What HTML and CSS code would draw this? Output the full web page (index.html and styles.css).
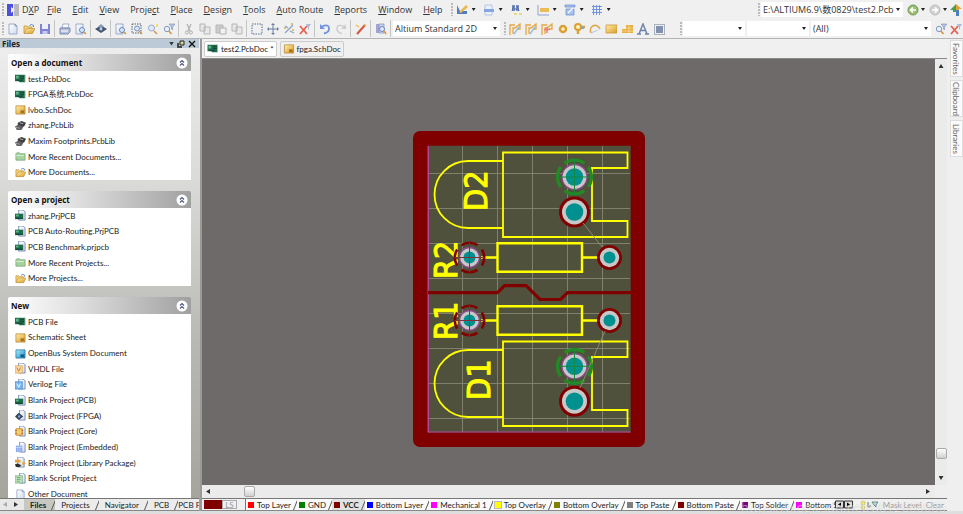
FILE: index.html
```
<!DOCTYPE html>
<html lang="en">
<head>
<meta charset="utf-8">
<title>DXP - test2.PcbDoc</title>
<link rel="stylesheet" href="styles.css">
</head>
<body>
<svg class="defs" aria-hidden="true">
  <defs>
    <linearGradient id="gold" x1="0" y1="0" x2="1" y2="1"><stop offset="0" stop-color="#fff0a8"/><stop offset="1" stop-color="#dc9a28"/></linearGradient>
    <linearGradient id="sheet" x1="0" y1="0" x2="1" y2="1"><stop offset="0" stop-color="#fff"/><stop offset="1" stop-color="#cfdcf2"/></linearGradient>
    <linearGradient id="cyan" x1="0" y1="0" x2="1" y2="1"><stop offset="0" stop-color="#a8f0ff"/><stop offset="1" stop-color="#1c86c4"/></linearGradient>
  </defs>
  <symbol id="page" viewBox="0 0 12 12"><path d="M2 1h6l2 2v8H2z" fill="url(#sheet)" stroke="#8d9bbd" stroke-width=".8"/><path d="M8 1v2h2" fill="none" stroke="#6a7ca8" stroke-width=".7"/></symbol>
  <symbol id="open" viewBox="0 0 12 12"><path d="M1 10V3h3l1 1h4v6z" fill="#f6d477" stroke="#b98b35" stroke-width=".7"/><path d="M1 10.500l2.500-5H12l-2.500 5z" fill="url(#gold)" stroke="#b98b35" stroke-width=".6"/><path d="M6.500 2.500q2-2 4 0v1.500" fill="none" stroke="#5b7fc0"/></symbol>
  <symbol id="save" viewBox="0 0 12 12"><path d="M1 1h10v10H1z" fill="#8084d4"/><path d="M3 1h6v5H3z" fill="#eef0fc"/><path d="M3.500 8h5v3h-5z" fill="#c3c6ee"/></symbol>
  <symbol id="print" viewBox="0 0 12 12"><path d="M4 1h6l-1 4H3z" fill="#fff" stroke="#8090b4" stroke-width=".7"/><path d="M1 5h10v4l-2 2H1z" fill="#b4c0dc" stroke="#66779f" stroke-width=".8"/><path d="M2 8h7" stroke="#fff"/></symbol>
  <symbol id="preview" viewBox="0 0 12 12"><path d="M1 1h7v10H1z" fill="url(#sheet)" stroke="#8d9bbd" stroke-width=".8"/><circle cx="7" cy="7" r="2.500" fill="#d5e8fb" stroke="#6a86b8"/><path d="M9 9l2 2" stroke="#d29442" stroke-width="1.600"/></symbol>
  <symbol id="eye" viewBox="0 0 12 12"><path d="M0 6l6-3.500 6 3.500-6 4z" fill="#43536d"/><path d="M3 3.500L6 1l3 2.500-3 2z" fill="#8a9ab4"/><circle cx="6" cy="6" r="1.500" fill="#b8d0e8"/></symbol>
  <symbol id="zoomarea" viewBox="0 0 12 12"><path d="M1 1h9v9H1z" fill="none" stroke="#52617c" stroke-dasharray="1.500 1"/><circle cx="6" cy="5.500" r="2.500" fill="#d5e8fb" stroke="#7a92c0"/><path d="M8 8l3 3" stroke="#d29442" stroke-width="1.600"/></symbol>
  <symbol id="zoomdot" viewBox="0 0 12 12"><circle cx="4.500" cy="5" r="3" fill="#deeafa" stroke="#95a9cc"/><path d="M7 8l3 3" stroke="#d29442" stroke-width="1.500"/><path d="M9 1h2v3H9z" fill="#f2df68"/></symbol>
  <symbol id="zoomfilter" viewBox="0 0 12 12"><path d="M6 1h6L9.500 4v3L8.500 6V4z" fill="#b4c4e0" stroke="#7f91b4" stroke-width=".6"/><circle cx="4" cy="6" r="2.700" fill="#e8f1fb" stroke="#8599bd"/><path d="M6 8l2.500 3" stroke="#d29442" stroke-width="1.600"/></symbol>
  <symbol id="cut" viewBox="0 0 12 12"><path d="M4 1l3 7M8 1L5 8" stroke="#b0b0b0" stroke-width="1.200"/><circle cx="3.800" cy="9.500" r="1.500" fill="none" stroke="#b0b0b0"/><circle cx="8" cy="9.500" r="1.500" fill="none" stroke="#b0b0b0"/></symbol>
  <symbol id="copy" viewBox="0 0 12 12"><path d="M1 1h5v7H1zM5 4h6v7H5z" fill="#e8e8e8" stroke="#b6b6b6"/></symbol>
  <symbol id="paste" viewBox="0 0 12 12"><path d="M1 2h7v8H1z" fill="#ccc" stroke="#b6b6b6"/><path d="M5 5h6v6H5z" fill="#f1f1f1" stroke="#b0b0b0"/></symbol>
  <symbol id="marquee" viewBox="0 0 12 12"><path d="M1 1h10v10H1z" fill="none" stroke="#5e6f9a" stroke-dasharray="1.500 1"/></symbol>
  <symbol id="move" viewBox="0 0 12 12"><path d="M6 1v10M1 6h10" stroke="#6d7f9f"/><path d="M6 0l2 2H4zM6 12l2-2H4zM0 6l2-2v4zM12 6l-2-2v4z" fill="#6d7f9f"/></symbol>
  <symbol id="cross" viewBox="0 0 12 12"><path d="M2 10l8-8M2 3l3 2M7 8l4 2" stroke="#8ca0c4" stroke-width="1.200"/><path d="M1 5h2M8 1h2M9 7h2" stroke="#cbb84e" stroke-width="1.500"/></symbol>
  <symbol id="clear" viewBox="0 0 12 12"><path d="M7 1h5l-2 3v3L9 6V4z" fill="#a9bbdb"/><path d="M1 3l7 8M8 3l-7 8" stroke="#e66150" stroke-width="1.800"/></symbol>
  <symbol id="undo" viewBox="0 0 12 12"><path d="M3 3.500q7-3 7 2 0 4-5 5" fill="none" stroke="#6f93dc" stroke-width="1.800"/><path d="M1 1v5h5z" fill="#6f93dc"/></symbol>
  <symbol id="redo" viewBox="0 0 12 12"><path d="M9 3.500q-7-3-7 2 0 4 5 5" fill="none" stroke="#cdcdcd" stroke-width="1.500"/><path d="M11 1v5H6z" fill="#cdcdcd"/></symbol>
  <symbol id="wand" viewBox="0 0 12 12"><path d="M2 11l8-9" stroke="#d8543d" stroke-width="2"/><path d="M1 2l3 2M9 1l2 2" stroke="#efb857" stroke-width="1.500"/></symbol>
  <symbol id="browse" viewBox="0 0 12 12"><path d="M1 1h3v9H1z" fill="#a8a4d2"/><path d="M4 1h5v9H4z" fill="#c9d4ee" stroke="#7f8fbf" stroke-width=".7"/><circle cx="7" cy="6" r="2.500" fill="#dcecff" stroke="#7284b8"/><path d="M9 8l2 3" stroke="#d29442" stroke-width="1.500"/></symbol>
  <symbol id="route" viewBox="0 0 12 12"><path d="M1 12V2h5M4 11V5h2l5-4v5H8" fill="none" stroke="#e5a63f" stroke-width="1.300"/><path d="M5 11l5-7" stroke="#92b9dc" stroke-width="1.300"/></symbol>
  <symbol id="routered" viewBox="0 0 12 12"><path d="M1 12V2h5M4 11V5h2l5-4v5H8" fill="none" stroke="#e5a63f" stroke-width="1.300"/><path d="M3 6.500h6M6 4v6" stroke="#ea7c70" stroke-width="1.500"/></symbol>
  <symbol id="pad" viewBox="0 0 12 12"><circle cx="6" cy="6" r="3" fill="#fff3c4" stroke="#dba035" stroke-width="2.500"/></symbol>
  <symbol id="via" viewBox="0 0 12 12"><path d="M5 6v5M6 4h6" stroke="#dba035" stroke-width="2.500"/><circle cx="5" cy="4" r="3" fill="#fff3c4" stroke="#dba035" stroke-width="2"/><path d="M8 3h3v3H8z" fill="#70b0d2"/></symbol>
  <symbol id="arc" viewBox="0 0 12 12"><path d="M2 10C-1 3 8-1 11 6" fill="none" stroke="#dfa441" stroke-width="1.500"/><path d="M2 10l7-3" stroke="#b4c9e6"/></symbol>
  <symbol id="fill" viewBox="0 0 12 12"><path d="M1 2h11v8H1z" fill="url(#gold)" stroke="#cf942f" stroke-width=".8"/></symbol>
  <symbol id="poly" viewBox="0 0 12 12"><path d="M1 6h4V2h7v8H1z" fill="#e7ae42"/><path d="M1 8h11M5 5h7M8 2v8" stroke="#f8dc98" stroke-width=".8"/></symbol>
  <symbol id="letter" viewBox="0 0 12 12"><path d="M2 11L6 1l4 10M3.500 7.500h5M0 11h4M8 11h4" fill="none" stroke="#7184ac" stroke-width="1.500"/></symbol>
  <symbol id="chip" viewBox="0 0 12 12"><path d="M3 3h7v7H3z" fill="#8291ad"/><path d="M1.500 1.500h10v10h-10z" fill="none" stroke="#63718e" stroke-dasharray="1 1"/></symbol>
  <symbol id="draw" viewBox="0 0 12 12"><path d="M1 1v9h10V7H4z" fill="#537cc6"/><path d="M3 8l7-7 2 2-7 6z" fill="#e8b94a"/></symbol>
  <symbol id="align" viewBox="0 0 12 12"><path d="M2 1h7v10H2z" fill="#e8f0fc" stroke="#a7bbdf" stroke-width=".8"/><path d="M1 5h10v3H1z" fill="#86a4dd"/></symbol>
  <symbol id="find" viewBox="0 0 12 12"><path d="M2 1h3v6H2zM6 1h3v6H6z" fill="#7890c2"/><path d="M2 7l2-5M9 7L7 2M4 5h3" stroke="#4e6598" fill="none"/><path d="M4 10h3M9 10h3" stroke="#e6cf60" stroke-width="1.500"/></symbol>
  <symbol id="dim" viewBox="0 0 12 12"><path d="M1 1v10h11" fill="none" stroke="#8ba3d0"/><path d="M3 4h9v4H3z" fill="#ebbd56"/></symbol>
  <symbol id="room" viewBox="0 0 12 12"><path d="M1 1h10v2H1zM2 5h8v6H2z" fill="#a8c3ef" stroke="#6f92d3" stroke-width=".8"/><path d="M4 9l5-5" stroke="#fff" stroke-width="1.300"/></symbol>
  <symbol id="grid" viewBox="0 0 12 12"><path d="M2.500 1v10M5.500 1v10M8.500 1v10M1 2.500h10M1 5.500h10M1 8.500h10" stroke="#7394d8"/></symbol>
  <symbol id="back" viewBox="0 0 12 12"><circle cx="6" cy="6" r="5" fill="#9abf72" stroke="#6f9a4c"/><path d="M9 6H4M6 3.500L3.500 6 6 8.500" fill="none" stroke="#fff" stroke-width="1.600"/></symbol>
  <symbol id="forward" viewBox="0 0 12 12"><circle cx="6" cy="6" r="5" fill="#d2d2d2" stroke="#bbb"/><path d="M3 6h5M6 3.500L8.500 6 6 8.500" fill="none" stroke="#fff" stroke-width="1.600"/></symbol>
  <symbol id="home" viewBox="0 0 12 12"><path d="M6 0l6 5H9v6H6z" fill="#e2a437"/><path d="M6 0L0 6h3v2h3z" fill="#4c9c50"/><path d="M6 6h3v6H6z" fill="#4b80c8"/></symbol>
  <symbol id="pcb" viewBox="0 0 12 12"><path d="M0 2h11v8H5L4 9H0z" fill="#1f6b4b"/><path d="M1 3h3v3H1z" fill="#64b48a"/><path d="M6 4h4M6 6h4M2 8h6" stroke="#114536"/><path d="M11 2v8" stroke="#9cc0a8"/></symbol>
  <symbol id="sch" viewBox="0 0 12 12"><path d="M1 2h10v9H1z" fill="url(#gold)" stroke="#a97a24" stroke-width=".7"/><path d="M6 7h4v3H6z" fill="#a37322"/></symbol>
  <symbol id="bus" viewBox="0 0 12 12"><path d="M1 2h10v9H1z" fill="url(#cyan)" stroke="#1b6691" stroke-width=".7"/><path d="M6 7h4v3H6z" fill="#0f5e82"/></symbol>
  <symbol id="lib" viewBox="0 0 12 12"><path d="M3 3l4-2 5 2-2 4-4 1-3-2z" fill="#3b3b3b"/><path d="M0 7l4-2 5 3-2 3H2z" fill="#606060"/><path d="M5 3l4 1" stroke="#bbb"/><path d="M1 8l4 1" stroke="#aaa"/></symbol>
  <symbol id="green" viewBox="0 0 12 12"><path d="M1 10V3l1-1h3l1 1h5v7z" fill="#a6d49e" stroke="#68986a" stroke-width=".7"/><path d="M1 5h9" stroke="#d8f0d2"/></symbol>
  <symbol id="prj" viewBox="0 0 12 12"><path d="M4 0h5l2 2v9H4z" fill="url(#sheet)" stroke="#58759d" stroke-width=".8"/><path d="M0 4h9v6H0z" fill="#1f6b4b"/><path d="M1 5h3v2H1z" fill="#5cb886"/><path d="M1 9h7" stroke="#0e4030"/></symbol>
  <symbol id="vhdl" viewBox="0 0 12 12"><path d="M4 0h5l2 2v9H4z" fill="url(#sheet)" stroke="#58759d" stroke-width=".8"/><path d="M0 3h8v8H0z" fill="#f8d9a6" stroke="#dd9c45" stroke-width=".7"/><path d="M2 5l2 4 2-4" fill="none" stroke="#cb7926"/></symbol>
  <symbol id="verilog" viewBox="0 0 12 12"><path d="M4 0h5l2 2v9H4z" fill="url(#sheet)" stroke="#58759d" stroke-width=".8"/><path d="M0 3h8v8H0z" fill="#78b8f5" stroke="#3c85cf" stroke-width=".7"/><path d="M2 5l2 4 2-4" fill="none" stroke="#fff"/></symbol>
  <symbol id="fpga" viewBox="0 0 12 12"><path d="M5 0h4l2 2v9H5z" fill="url(#sheet)" stroke="#58759d" stroke-width=".8"/><path d="M0 7l4-4 5 4-5 4z" fill="#33465c"/><circle cx="4.500" cy="7" r="1.300" fill="#8ca8c8"/></symbol>
  <symbol id="core" viewBox="0 0 12 12"><path d="M5 0h4l2 2v9H5z" fill="url(#sheet)" stroke="#58759d" stroke-width=".8"/><path d="M1 3h7v7H1z" fill="#f4cb72" stroke="#c68b2b"/><path d="M0 5h2M0 8h2M7 5h2M7 8h2" stroke="#a46c1c"/></symbol>
  <symbol id="emb" viewBox="0 0 12 12"><path d="M5 0h4l2 2v9H5z" fill="url(#sheet)" stroke="#58759d" stroke-width=".8"/><path d="M1 4h7v7H1z" fill="#86a8ea"/><path d="M3 4v7M5.500 4v7M1 6h7" stroke="#d2e0fb" stroke-width=".7"/></symbol>
  <symbol id="pkg" viewBox="0 0 12 12"><path d="M3 0h5l2 2v9H3z" fill="url(#sheet)" stroke="#58759d" stroke-width=".8"/><path d="M0 3h6v3H0zM8 5l4 2-4 2z" fill="#e8a43c"/><path d="M0 8l3-1 4 2-2 2H1z" fill="#303030"/></symbol>
  <symbol id="script" viewBox="0 0 12 12"><path d="M5 0h4l2 2v9H5z" fill="url(#sheet)" stroke="#58759d" stroke-width=".8"/><path d="M0 3h8v8H0z" fill="#bfe2bc" stroke="#71a774" stroke-width=".7"/><path d="M2 5h4M2 7h4M2 9h3" stroke="#5c9863" stroke-width=".8"/></symbol>
  <symbol id="up" viewBox="0 0 12 12"><circle cx="6" cy="6" r="5.500" fill="#fff"/><path d="M4 5.500l2-2 2 2M4 8.500l2-2 2 2" fill="none" stroke="#4a5580" stroke-width="1.100"/></symbol>
</svg>

<div class="app">
  <header class="bars">
    <div class="bar menubar">
      <i class="grip"></i>
      <svg class="logo" viewBox="0 0 12 12"><path d="M0 0h6v12H0z" fill="#4c50dc"/><path d="M7 0h5v12H7z" fill="#b6b8bd"/><path d="M4 3l4 3-4 3z" fill="#eef"/></svg>
      <nav class="menu">
        <button class="first">D<u>X</u>P</button><button><u>F</u>ile</button><button><u>E</u>dit</button><button><u>V</u>iew</button><button>Proje<u>c</u>t</button><button><u>P</u>lace</button><button><u>D</u>esign</button><button><u>T</u>ools</button><button><u>A</u>uto Route</button><button><u>R</u>eports</button><button><u>W</u>indow</button><button><u>H</u>elp</button>
      </nav>
      <i class="grip"></i>
      <button class="tool drop" aria-label="Utilities"><svg><use href="#draw"/></svg></button>
      <button class="tool drop" aria-label="Align"><svg><use href="#align"/></svg></button>
      <button class="tool drop" aria-label="Find selections"><svg><use href="#find"/></svg></button>
      <button class="tool drop" aria-label="Dimensions"><svg><use href="#dim"/></svg></button>
      <button class="tool drop" aria-label="Rooms"><svg><use href="#room"/></svg></button>
      <button class="tool drop" aria-label="Grid"><svg><use href="#grid"/></svg></button>
      <div class="right">
        <i class="grip"></i>
        <label class="combo path"><select aria-label="Document path"><option>E:\ALTIUM6.9\数0829\test2.Pcb</option></select></label>
        <button class="tool drop nav" aria-label="Back"><svg><use href="#back"/></svg></button>
        <button class="tool drop nav" aria-label="Forward"><svg><use href="#forward"/></svg></button>
        <button class="tool home" aria-label="Home"><svg><use href="#home"/></svg></button>
      </div>
    </div>
    <div class="bar toolbar">
      <i class="grip"></i>
      <button class="tool" aria-label="New"><svg><use href="#page"/></svg></button>
      <button class="tool" aria-label="Open"><svg><use href="#open"/></svg></button>
      <button class="tool" aria-label="Save"><svg><use href="#save"/></svg></button><i class="sep"></i>
      <button class="tool" aria-label="Print"><svg><use href="#print"/></svg></button>
      <button class="tool" aria-label="Preview"><svg><use href="#preview"/></svg></button><i class="sep"></i>
      <button class="tool" aria-label="Devices"><svg><use href="#eye"/></svg></button><i class="sep"></i>
      <button class="tool" aria-label="Fit document"><svg><use href="#preview"/></svg></button>
      <button class="tool" aria-label="Zoom area"><svg><use href="#zoomarea"/></svg></button>
      <button class="tool" aria-label="Zoom selected"><svg><use href="#zoomdot"/></svg></button>
      <button class="tool" aria-label="Zoom filtered"><svg><use href="#zoomfilter"/></svg></button><i class="sep"></i>
      <button class="tool" aria-label="Cut"><svg><use href="#cut"/></svg></button>
      <button class="tool" aria-label="Copy"><svg><use href="#copy"/></svg></button>
      <button class="tool" aria-label="Paste"><svg><use href="#paste"/></svg></button>
      <button class="tool" aria-label="Rubber stamp"><svg><use href="#copy"/></svg></button><i class="sep"></i>
      <button class="tool" aria-label="Select area"><svg><use href="#marquee"/></svg></button>
      <button class="tool" aria-label="Move"><svg><use href="#move"/></svg></button>
      <button class="tool" aria-label="Deselect"><svg><use href="#cross"/></svg></button>
      <button class="tool" aria-label="Clear filter"><svg><use href="#clear"/></svg></button><i class="sep"></i>
      <button class="tool" aria-label="Undo"><svg><use href="#undo"/></svg></button>
      <button class="tool" aria-label="Redo"><svg><use href="#redo"/></svg></button><i class="sep"></i>
      <button class="tool" aria-label="Cross probe"><svg><use href="#wand"/></svg></button><i class="sep"></i>
      <button class="tool" aria-label="Browse components"><svg><use href="#browse"/></svg></button><i class="sep"></i>
      <label class="combo view"><select aria-label="View configuration"><option>Altium Standard 2D</option></select></label>
      <i class="grip"></i>
      <button class="tool" aria-label="Route"><svg><use href="#route"/></svg></button>
      <button class="tool" aria-label="Route pair"><svg><use href="#route"/></svg></button>
      <button class="tool" aria-label="Route multiple"><svg><use href="#routered"/></svg></button>
      <button class="tool" aria-label="Pad"><svg><use href="#pad"/></svg></button>
      <button class="tool" aria-label="Via"><svg><use href="#via"/></svg></button>
      <button class="tool" aria-label="Arc"><svg><use href="#arc"/></svg></button>
      <button class="tool" aria-label="Fill"><svg><use href="#fill"/></svg></button>
      <button class="tool" aria-label="Polygon"><svg><use href="#poly"/></svg></button>
      <button class="tool" aria-label="String"><svg><use href="#letter"/></svg></button>
      <button class="tool" aria-label="Component"><svg><use href="#chip"/></svg></button>
      <div class="right">
        <i class="grip"></i>
        <label class="combo small"><select aria-label="Net"><option></option></select></label>
        <label class="combo small"><select aria-label="Component"><option></option></select></label>
        <label class="combo all"><select aria-label="Filter"><option>(All)</option></select></label>
        <button class="tool" aria-label="Apply filter"><svg><use href="#zoomfilter"/></svg></button>
        <button class="tool last" aria-label="Remove filter"><svg><use href="#clear"/></svg></button>
      </div>
    </div>
  </header>

  <div class="body">
    <aside class="panel">
      <div class="title"><b>Files</b><i class="tri"></i>
        <svg class="pin" viewBox="0 0 8 8"><path d="M3 1h4v4H3z" fill="#d8d890" stroke="#222"/><path d="M1 3v4h4" fill="none" stroke="#222" stroke-width="1.500"/></svg>
        <svg class="pin" viewBox="0 0 8 8"><path d="M1 1l6 6M7 1L1 7" stroke="#111" stroke-width="1.400"/></svg>
      </div>
      <div class="groups">
        <section class="group seven">
          <h2>Open a document<svg><use href="#up"/></svg></h2>
          <ul>
            <li><svg><use href="#pcb"/></svg><a href="#">test.PcbDoc</a></li>
            <li><svg><use href="#pcb"/></svg><a href="#">FPGA系统.PcbDoc</a></li>
            <li><svg><use href="#sch"/></svg><a href="#">lvbo.SchDoc</a></li>
            <li><svg><use href="#lib"/></svg><a href="#">zhang.PcbLib</a></li>
            <li><svg><use href="#lib"/></svg><a href="#">Maxim Footprints.PcbLib</a></li>
            <li><svg><use href="#green"/></svg><a href="#">More Recent Documents...</a></li>
            <li><svg><use href="#open"/></svg><a href="#">More Documents...</a></li>
          </ul>
        </section>
        <section class="group five">
          <h2>Open a project<svg><use href="#up"/></svg></h2>
          <ul>
            <li><svg><use href="#prj"/></svg><a href="#">zhang.PrjPCB</a></li>
            <li><svg><use href="#prj"/></svg><a href="#">PCB Auto-Routing.PrjPCB</a></li>
            <li><svg><use href="#prj"/></svg><a href="#">PCB Benchmark.prjpcb</a></li>
            <li><svg><use href="#green"/></svg><a href="#">More Recent Projects...</a></li>
            <li><svg><use href="#open"/></svg><a href="#">More Projects...</a></li>
          </ul>
        </section>
        <section class="group twelve">
          <h2>New<svg><use href="#up"/></svg></h2>
          <ul>
            <li><svg><use href="#pcb"/></svg><a href="#">PCB File</a></li>
            <li><svg><use href="#sch"/></svg><a href="#">Schematic Sheet</a></li>
            <li><svg><use href="#bus"/></svg><a href="#">OpenBus System Document</a></li>
            <li><svg><use href="#vhdl"/></svg><a href="#">VHDL File</a></li>
            <li><svg><use href="#verilog"/></svg><a href="#">Verilog File</a></li>
            <li><svg><use href="#prj"/></svg><a href="#">Blank Project (PCB)</a></li>
            <li><svg><use href="#fpga"/></svg><a href="#">Blank Project (FPGA)</a></li>
            <li><svg><use href="#core"/></svg><a href="#">Blank Project (Core)</a></li>
            <li><svg><use href="#emb"/></svg><a href="#">Blank Project (Embedded)</a></li>
            <li><svg><use href="#pkg"/></svg><a href="#">Blank Project (Library Package)</a></li>
            <li><svg><use href="#script"/></svg><a href="#">Blank Script Project</a></li>
            <li><svg><use href="#page"/></svg><a href="#">Other Document</a></li>
          </ul>
        </section>
      </div>
      <div class="tabs paneltabs">
        <span class="arrows"><i class="tri left dim"></i><i class="tri rightward"></i></span>
        <button class="tab on">Files</button><button class="tab">Projects</button><button class="tab">Navigator</button><button class="tab">PCB</button><button class="tab end">PCB F</button>
      </div>
    </aside>

    <main class="work">
      <div class="docs">
        <button class="doc on"><svg><use href="#pcb"/></svg>test2.PcbDoc *</button>
        <button class="doc"><svg><use href="#sch"/></svg>fpga.SchDoc</button>
      </div>
      <div class="view-row">
        <div class="canvas">
          <svg class="board" viewBox="413 131 232 316">
            <defs>
              <g id="padA"><circle r="12.500" fill="#c8c8c8" stroke="#8a4a8a" stroke-width="1.300"/><circle r="8.700" fill="#009090"/><g fill="none" stroke="#238a23" stroke-width="3.200"><circle r="17" pathLength="360" stroke-dasharray="72 18" stroke-dashoffset="36"/></g><path d="M-18 0h36M0-18v36" stroke="#148a3c"/></g>
              <g id="padB"><circle r="15.500" fill="#800000"/><circle r="12.500" fill="#c8c8c8"/><circle r="8.800" fill="#009090"/></g>
              <g id="padC"><circle r="10" fill="#c8c8c8" stroke="#8a4a8a" stroke-width="1.300"/><circle r="6" fill="#009090"/><circle r="14.700" fill="none" stroke="#800000" stroke-width="2.600" pathLength="360" stroke-dasharray="66 24" stroke-dashoffset="33"/><path d="M-15 0h30M0-15v30" stroke="#803038"/></g>
              <g id="padD"><circle r="12.500" fill="#800000"/><circle r="9.700" fill="#c8c8c8"/><circle r="6" fill="#009090"/></g>
              <g id="led" fill="none" stroke="#ff0" stroke-width="1.800"><path d="M503 0H627.500V15.500H592V68.500H627.500V84.500H503z"/><path d="M503 8.500H468A33.500 33.500 0 0 0 468 75.500H503"/></g>
              <g id="res" fill="none" stroke="#ff0" stroke-width="2.400"><path d="M497.500-14.200h84.500v28.500h-84.500zM481 0h16M582 0h16"/></g>
            </defs>
            <rect x="413" y="131" width="232" height="316" rx="7" fill="#800000"/>
            <path d="M427.500 145.700H630.700V432.500H427.500z" fill="#50513d"/>
            <path d="M462.500 146V432M497.500 146V432M532.500 146V432M567.500 146V432M602.500 146V432M428 173.500H630M428 208.500H630M428 243.500H630M428 278.500H630M428 313.500H630M428 348.500H630M428 383.500H630M428 418.500H630" stroke="#858674" stroke-width=".9"/>
            <path d="M428.300 146V432H630.500" fill="none" stroke="#b6489e" stroke-width="1.200"/>
            <path d="M428 292.600H497.500L504.500 285.700H526L540 299.500H560.500L567.500 292.600H631" fill="none" stroke="#800000" stroke-width="3.200"/>
            <use href="#led" y="152.500"/><use href="#led" y="341.500"/>
            <use href="#res" y="257.500"/><use href="#res" y="320.500"/>
            <g class="label">
              <text transform="translate(487 211) rotate(-90)">D2</text>
              <text transform="translate(457 279) rotate(-90)">R2</text>
              <text transform="translate(457 340) rotate(-90)">R1</text>
              <text transform="translate(490 400) rotate(-90)">D1</text>
            </g>
            <use href="#padA" x="574.500" y="177"/><use href="#padB" x="574.500" y="212"/>
            <use href="#padC" x="469.500" y="257.500"/><use href="#padD" x="609.500" y="257.500"/>
            <use href="#padC" x="469.500" y="320.500"/><use href="#padD" x="609.500" y="320.500"/>
            <use href="#padA" x="574.500" y="366.300"/><use href="#padB" x="574.500" y="401.200"/>
            <path d="M583 223L602 247M605 331L580 388" stroke="#8d8e72" stroke-width=".9"/>
          </svg>
        </div>
        <div class="vscroll"><i class="tri upward"></i><i class="thumb"></i><i class="tri"></i></div>
      </div>
      <div class="hscroll"><i class="tri left"></i><i class="thumb"></i><i class="tri rightward"></i></div>
      <div class="tabs layers">
        <i class="current"></i><button class="ls">LS</button>
        <div class="layerlist">
          <button class="tab"><i class="sw red"></i>Top Layer</button>
          <button class="tab"><i class="sw green"></i>GND</button>
          <button class="tab on"><i class="sw maroon"></i>VCC</button>
          <button class="tab"><i class="sw blue"></i>Bottom Layer</button>
          <button class="tab"><i class="sw magenta"></i>Mechanical 1</button>
          <button class="tab"><i class="sw yellow"></i>Top Overlay</button>
          <button class="tab"><i class="sw olive"></i>Bottom Overlay</button>
          <button class="tab"><i class="sw gray"></i>Top Paste</button>
          <button class="tab"><i class="sw maroon"></i>Bottom Paste</button>
          <button class="tab"><i class="sw purple"></i>Top Solder</button>
          <button class="tab end"><i class="sw magenta"></i>Bottom So</button>
        </div>
        <div class="mask">
          <svg class="nudge" viewBox="0 0 18 8"><path d="M.5.500h8v7h-8zM9.500.500h8v7h-8z" fill="#ddd" stroke="#333"/><path d="M6 2v4L3 4zM12 2v4l3-2z" fill="#000"/></svg>
          <svg class="bulb" viewBox="0 0 22 10"><circle cx="6" cy="3" r="2" fill="#f3ee6c" stroke="#b5b05a" stroke-width=".6"/><circle cx="6" cy="7.500" r="1.800" fill="#f3ee6c" stroke="#b5b05a" stroke-width=".6"/><path d="M11 2v5h2V5" fill="none" stroke="#777"/><path d="M15 2h6l-2 3v2l-2-2z" fill="#b8e0dc" stroke="#577" stroke-width=".8"/></svg>
          <button>Mask Level</button><button>Clear</button>
        </div>
      </div>
      <span class="watermark">https://blog.csdn.net/u012666666</span>
    </main>

    <nav class="side">
      <button>Favorites</button><button>Clipboard</button><button>Libraries</button>
    </nav>
  </div>
</div>
</body>
</html>
```
FILE: styles.css
```
* { box-sizing: border-box; }
body { margin: 0; font: 8px/12px Lato, "Noto Sans CJK SC", sans-serif; color: #222; background: #f0f0f0; }
button, select { font: inherit; color: inherit; border: 0; padding: 0; margin: 0; background: none; }
button { white-space: nowrap; }
svg { display: block; flex: none; }
i { display: block; flex: none; }
.defs { position: absolute; width: 0; height: 0; }

.app { display: flex; flex-direction: column; height: 100vh; padding-bottom: 3px; overflow: hidden; background: #dedede; }
.bars { background: #f0f0f0; border-bottom: 1px solid #b4b4b4; }
.bar { display: flex; align-items: center; height: 19px; font: 9px/14px "Open Sans", "Noto Sans CJK SC", sans-serif; color: #333; }
.grip { width: 2px; height: 13px; margin: 0 1px 0 2px; background: repeating-linear-gradient(#bbb 0 2px, #f0f0f0 2px 3px); }
.logo { width: 12px; height: 12px; margin-left: 2px; }
.menu { display: flex; gap: 11px; padding: 0 6px 0 3px; }
.menu u { text-underline-offset: 1px; text-decoration-thickness: 1px; }
.menu .first { margin-right: -3px; }
.tool { flex: none; width: 16px; height: 16px; display: flex; align-items: center; justify-content: center; }
.tool svg { width: 12px; height: 12px; }
.drop { width: 27px; justify-content: flex-start; gap: 4px; padding-left: 2px; }
.drop::after, .combo::after { content: ""; width: 4px; height: 3px; background: #222; clip-path: polygon(0 0, 100% 0, 50% 100%); }
.nav { width: 22px; gap: 2px; padding-left: 2px; }
.home { width: 14px; }
.sep { width: 1px; height: 17px; background: #c4c4c4; margin: 0 2px 0 1px; }
.right { margin-left: auto; display: flex; align-items: center; }
.combo { display: flex; align-items: center; background: #fff; height: 15px; padding-right: 3px; margin-right: 2px; }
.combo select { flex: 1; min-width: 0; appearance: none; height: 15px; padding-left: 2px; }
.path { width: 142px; }
.view { width: 107px; }
.small { width: 62px; }
.all { width: 120px; }
.last { width: 14px; }

.body { flex: 1; min-height: 0; display: flex; background: #efefef; }
.panel { width: 202px; flex: none; display: flex; flex-direction: column; border-right: 2px solid #999; background: linear-gradient(#eee, #dadad8 30%, #b8b8b3 65%, #a4a39a); }
.title { display: flex; align-items: center; gap: 3px; height: 9px; margin-right: 1px; padding: 0 3px 0 2px; background: #bccad8; }
.title b { margin-right: auto; font: bold 8px/9px "Open Sans", sans-serif; }
.pin { width: 8px; height: 8px; }
.tri { width: 5px; height: 4px; background: #333; clip-path: polygon(0 0, 100% 0, 50% 100%); }
.upward { clip-path: polygon(0 100%, 100% 100%, 50% 0); }
.left, .rightward { width: 4px; height: 5px; clip-path: polygon(0 50%, 100% 0, 100% 100%); }
.rightward { clip-path: polygon(0 0, 100% 50%, 0 100%); }
.dim { background: #aaa; }
.groups { flex: 1; min-height: 0; overflow: hidden; padding: 6px 9px 0 8px; display: flex; flex-direction: column; gap: 11px; }
.group { flex: none; }
.group h2 { display: flex; align-items: center; justify-content: space-between; margin: 0; height: 17px; padding: 0 3px; font: bold 8px/17px "Open Sans", sans-serif; color: #111; background: linear-gradient(90deg, #fff, #ddd 40%, #a0a0a0); border-radius: 2px 2px 0 0; }
.group h2 svg { width: 12px; height: 12px; }
.group ul { display: grid; grid-auto-rows: 1fr; margin: 0; padding: 0 0 0 7px; list-style: none; background: #fff; }
.seven ul { min-height: 109px; }
.five ul { min-height: 78px; }
.twelve ul { min-height: 188px; }
.group li { display: flex; align-items: center; gap: 2px; }
.group li svg { width: 11px; height: 11px; }
.group a { color: #222; text-decoration: none; white-space: nowrap; }

.tabs { display: flex; align-items: stretch; height: 13px; flex: none; background: #e8e8e8; border-top: 1px solid #777; border-bottom: 1px solid #888; overflow: hidden; }
.tab { position: relative; display: flex; align-items: center; gap: 3px; padding: 0 6px 0 3px; background: #fafafa; flex: none; }
.tab::after { content: ""; position: absolute; right: 1px; top: 0; width: 1px; height: 12px; background: #555; transform: skewX(-22deg); }
.tab.on { background: #e2e2e2; font-weight: bold; }
.tab.end { padding-right: 0; }
.tab.end::after { display: none; }
.arrows { display: flex; align-items: center; gap: 7px; padding: 0 6px 0 3px; }
.paneltabs { margin-right: 1px; }
.paneltabs .tab { padding: 0 9px 0 6px; background: #ececec; }
.paneltabs .tab.on { background: #c8c8c2; }
.paneltabs .tab.end { padding: 0; }

.work { position: relative; flex: 1; min-width: 0; display: flex; flex-direction: column; }
.docs { display: flex; gap: 3px; align-items: center; height: 20px; flex: none; padding-left: 2px; border-bottom: 1px solid #888; background: #f0f0f0; }
.doc { display: flex; align-items: center; gap: 2px; height: 16px; padding: 0 2px; border: 1px solid #ccc; border-radius: 2px; }
.doc svg { width: 12px; height: 11px; }
.doc.on { background: #fff; }
.view-row { flex: 1; min-height: 0; display: flex; }
.canvas { flex: 1; min-width: 0; overflow: hidden; padding: 72px 0 0 211px; background: #6e6a69; }
.board { width: 232px; height: 316px; }
.label { font: 32px "DejaVu Sans Condensed", "DejaVu Sans", sans-serif; fill: #ff0; stroke: #ff0; stroke-width: 1px; }
.vscroll { width: 12px; display: flex; flex-direction: column; align-items: center; padding: 5px 0; background: #ebebeb; }
.thumb { width: 11px; height: 11px; border: 1px solid #aaa; border-radius: 2px; background: linear-gradient(#fff, #d0d0d0); }
.vscroll .thumb { margin: auto 0 17px; }
.hscroll { height: 13px; margin-right: 12px; flex: none; display: flex; align-items: center; padding: 0 5px 0 4px; background: #ebebeb; }
.hscroll .thumb { margin: 0 auto 0 34px; }
.layers { padding-left: 2px; background: #f0f0f0; }
.current { width: 18px; height: 9px; margin-top: 1px; background: #800000; }
.ls { width: 15px; height: 9px; line-height: 8px; margin: 1px 8px 0 0; border: 1px solid #aaa; color: #999; }
.layerlist { display: flex; flex: 1; min-width: 0; overflow: hidden; border-left: 1px solid #777; }
.layerlist .tab { padding-left: 2px; }
.sw { width: 6px; height: 6px; }
.red { background: #f00; }
.green { background: #008000; }
.maroon { background: #800000; }
.blue { background: #00f; }
.magenta { background: #f0f; }
.yellow { background: #ff0; outline: 1px solid #bbb; }
.olive { background: #808000; }
.gray { background: #808080; }
.purple { background: #800080; }
.mask { display: flex; align-items: center; gap: 4px; padding-right: 3px; color: #999; }
.nudge { width: 18px; height: 9px; }
.bulb { width: 22px; height: 10px; }
.watermark { position: absolute; right: 1px; bottom: -3px; font: 13px/13px "Open Sans", sans-serif; color: #fff; opacity: .45; text-shadow: 0 0 1px #666; pointer-events: none; }
.side { width: 16px; flex: none; display: flex; flex-direction: column; gap: 3px; padding: 1px 0 0 3px; }
.side button { writing-mode: vertical-rl; height: 37px; width: 13px; background: #fafafa; border: 1px solid #ddd; color: #666; }
```
